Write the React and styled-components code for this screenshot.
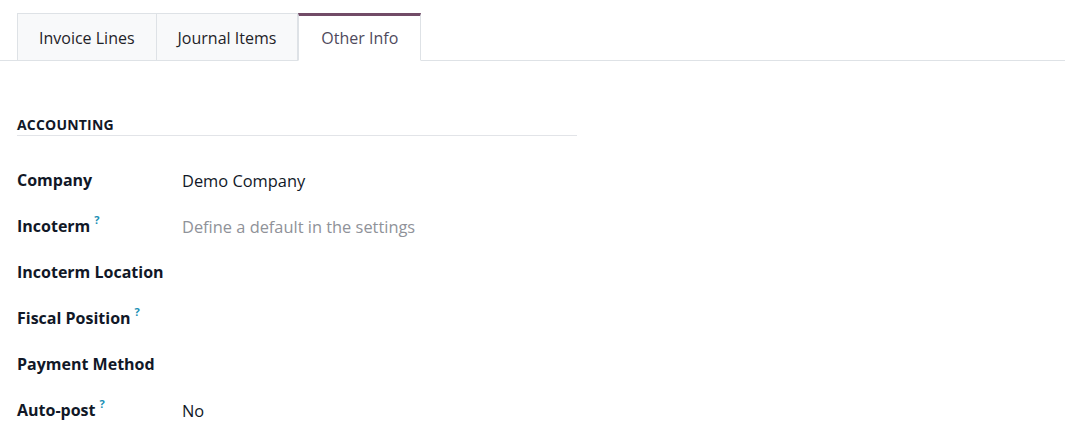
import React from "react";
import styled, { createGlobalStyle } from "styled-components";

const Global = createGlobalStyle`
  html, body { margin: 0; padding: 0; background: #fff; }
  body { font-family: "Open Sans", "Noto Sans", sans-serif; color: #111827; }
`;

const Page = styled.div`
  width: 1065px;
  height: 433px;
  overflow: hidden;
  background: #fff;
`;

const TabBar = styled.div`
  display: flex;
  padding: 13px 0 0 17px;
  border-bottom: 1px solid #dee2e6;
`;

const Tab = styled.div`
  box-sizing: border-box;
  height: 48px;
  display: flex;
  align-items: center;
  justify-content: center;
  padding: 0 ${(p) => p.$pad}px;
  margin-bottom: -1px;
  font-size: 16px;
  color: ${(p) => (p.$active ? "#4f4a5c" : "#1f2328")};
  background: ${(p) => (p.$active ? "#fff" : "#f8f9fa")};
  border: 1px solid #dee2e6;
  border-left-width: ${(p) => (p.$first || p.$active ? 1 : 0)}px;
  border-top: ${(p) => (p.$active ? "3px solid #714b67" : "1px solid #dee2e6")};
  border-bottom: 1px solid ${(p) => (p.$active ? "#fff" : "#dee2e6")};
  padding-top: ${(p) => (p.$active ? 0 : 2)}px;
`;

const Content = styled.div`
  padding: 0 17px;
  width: 560px;
`;

const SectionTitle = styled.div`
  margin-top: 55px;
  font-size: 14px;
  font-weight: 700;
  letter-spacing: 0.2px;
  text-transform: uppercase;
  color: #111827;
  padding-bottom: 1px;
  border-bottom: 1px solid #e2e4e8;
  line-height: 18px;
`;

const Rows = styled.div`
  margin-top: 32px;
  display: grid;
  grid-template-columns: 165px 1fr;
  grid-auto-rows: 46px;
`;

const Label = styled.div`
  font-size: 16px;
  font-weight: 700;
  color: #111827;
  line-height: 24px;
`;

const Help = styled.sup`
  color: #1a8fb4;
  font-size: 11px;
  font-weight: 700;
  margin-left: 4px;
  vertical-align: 0;
  position: relative;
  top: -8px;
`;

const Value = styled.div`
  font-size: 16.4px;
  line-height: 24px;
  padding-top: 1px;
  color: ${(p) => (p.$muted ? "#8f9299" : "#111827")};
`;

const rows = [
  { label: "Company", value: "Demo Company" },
  { label: "Incoterm", help: true, value: "Define a default in the settings", muted: true },
  { label: "Incoterm Location" },
  { label: "Fiscal Position", help: true },
  { label: "Payment Method" },
  { label: "Auto-post", help: true, value: "No" },
];

export default function App() {
  return (
    <Page>
      <Global />
      <TabBar>
        <Tab $first $pad={21}>Invoice Lines</Tab>
        <Tab $pad={21}>Journal Items</Tab>
        <Tab $active $pad={22}>Other Info</Tab>
      </TabBar>
      <Content>
        <SectionTitle>Accounting</SectionTitle>
        <Rows>
          {rows.map((r) => (
            <React.Fragment key={r.label}>
              <Label>
                {r.label}
                {r.help && <Help>?</Help>}
              </Label>
              <Value $muted={r.muted}>{r.value || ""}</Value>
            </React.Fragment>
          ))}
        </Rows>
      </Content>
    </Page>
  );
}
